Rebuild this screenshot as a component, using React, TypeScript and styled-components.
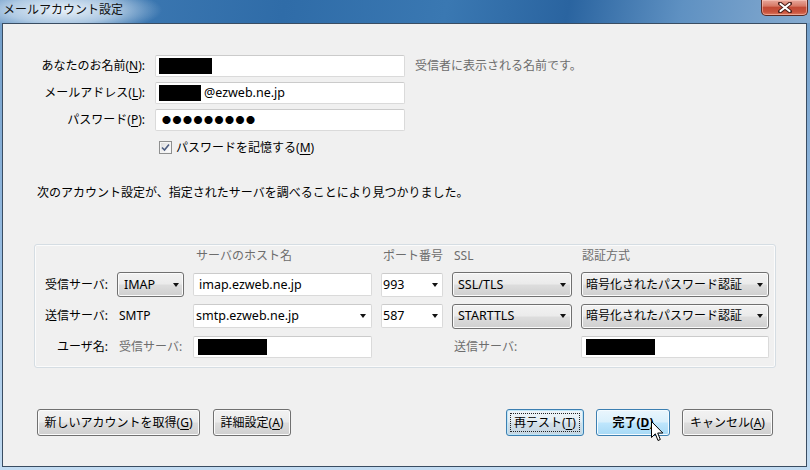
import React from 'react';
import styled, { createGlobalStyle, css } from 'styled-components';

const FONT = `"Segoe UI", "Noto Sans", "Noto Sans CJK JP", sans-serif`;

const Global = createGlobalStyle`
  html, body { margin: 0; padding: 0; background: #bcd6ee; }
  body { font-family: ${FONT}; font-size: 12px; color: #000; }
  * { box-sizing: border-box; }
  u { text-decoration-thickness: 1px; text-underline-offset: 2px; }
`;

const Window = styled.div`
  position: relative;
  width: 810px;
  height: 470px;
  display: flex;
  flex-direction: column;
  overflow: hidden;
  background: linear-gradient(180deg, #6f9cc8 0%, #98bde2 55%, #c3dcf2 100%);
`;

const TitleBar = styled.div`
  height: 23px;
  flex: none;
  display: flex;
  justify-content: space-between;
  align-items: flex-start;
  background:
    radial-gradient(ellipse 100px 24px at 62px 10px, rgba(240, 246, 252, 0.97) 0%, rgba(205, 223, 240, 0.75) 55%, rgba(200, 220, 238, 0) 100%),
    linear-gradient(100deg, #5b8ec0 0%, #3a76b0 18%, #2f6ca8 35%, #3a78b2 55%, #2a64a0 70%, #5f91c2 84%, #86abd0 100%);
`;

const Title = styled.div`
  padding-left: 3px;
  line-height: 20px;
  font-size: 12px;
  color: #111;
  white-space: nowrap;
`;

const CloseBtn = styled.div`
  width: 47px;
  height: 16px;
  margin-right: 2px;
  border: 1px solid #5a2a24;
  border-top: none;
  border-radius: 0 0 5px 5px;
  background: linear-gradient(180deg, #e7a89c 0%, #d77966 40%, #c24a35 50%, #c9533d 80%, #dd7b62 100%);
  box-shadow: inset 0 0 0 1px rgba(255, 210, 200, 0.5);
  display: flex;
  align-items: center;
  justify-content: center;
`;

const Client = styled.div`
  flex: 1;
  margin: 0 3px 3px 2px;
  border: 1px solid #3a4d62;
  background: #f0f0f0;
  display: flex;
  flex-direction: column;
`;

const FormGrid = styled.div`
  margin-top: 31px;
  display: grid;
  grid-template-columns: 142px 250px 1fr;
  grid-auto-rows: 22px;
  column-gap: 10px;
  row-gap: 5px;
`;

const FieldLabel = styled.div`
  align-self: center;
  text-align: right;
  white-space: nowrap;
  line-height: 16px;
`;

const Hint = styled.div`
  align-self: center;
  color: #6d6d6d;
  white-space: nowrap;
  line-height: 16px;
`;

const TextBox = styled.div<{ $h?: number; $pl?: number }>`
  height: ${(p) => p.$h ?? 22}px;
  align-self: center;
  background: #fff;
  border: 1px solid #dadada;
  border-top-color: #cbcbcb;
  border-radius: 2px;
  display: flex;
  align-items: center;
  padding-left: ${(p) => p.$pl ?? 3}px;
  padding-right: 8px;
  white-space: nowrap;
  line-height: 16px;
  font-size: 12.5px;
`;

const Redact = styled.span<{ $w: number }>`
  display: inline-block;
  width: ${(p) => p.$w}px;
  height: 16px;
  background: #000;
  flex: none;
`;

const AfterRedact = styled.span`
  margin-left: 3px;
`;

const Dots = styled.span`
  font-family: "Noto Sans CJK JP", sans-serif;
  font-size: 9px;
  letter-spacing: 1.5px;
  margin-left: 3px;
  line-height: 16px;
`;

const CheckRow = styled.div`
  grid-column: 2 / span 2;
  display: flex;
  align-items: center;
  gap: 4px;
  padding-left: 4px;
  white-space: nowrap;
`;

const CheckBox = styled.span`
  width: 13px;
  height: 13px;
  flex: none;
  border: 1px solid #8e8f8f;
  background: linear-gradient(135deg, #d8d8d8 0%, #f4f4f4 60%, #ffffff 100%);
  box-shadow: inset 0 0 0 1px #f4f4f4;
  display: flex;
  align-items: center;
  justify-content: center;
`;

const Message = styled.div`
  margin-top: 26px;
  padding-left: 34px;
  line-height: 18px;
  white-space: nowrap;
`;

const GroupBox = styled.div`
  margin: 42px 30px 0 31px;
  border: 1px solid #d5dde3;
  border-radius: 3px;
  box-shadow: inset 0 0 0 1px #fbfbfb;
  padding: 1px 6px 9px 0;
  display: grid;
  grid-template-columns: 73px 67px 179px 62px 120px 188px;
  grid-template-rows: 20px 25px 26px 23px;
  column-gap: 9px;
  row-gap: 6px;
`;

const GroupLabel = styled.div`
  align-self: center;
  text-align: right;
  white-space: nowrap;
  line-height: 16px;
`;

const ColText = styled.div<{ $pl: number; $gray?: boolean }>`
  align-self: center;
  padding-left: ${(p) => p.$pl}px;
  color: ${(p) => (p.$gray ? '#6d6d6d' : '#000')};
  white-space: nowrap;
  line-height: 16px;
`;

const Spacer = styled.div<{ $col: number }>`
  grid-column: ${(p) => p.$col};
`;

const buttonFace = css`
  border: 1px solid #707070;
  border-radius: 3px;
  background: linear-gradient(180deg, #f2f2f2 0%, #ebebeb 48%, #dddddd 52%, #cfcfcf 100%);
  box-shadow: inset 0 0 0 1px #fbfbfb;
`;

const SelectBtn = styled.div<{ $pl: number; $pr: number; $fs?: number }>`
  ${buttonFace}
  height: 25px;
  align-self: center;
  display: flex;
  align-items: center;
  justify-content: space-between;
  padding: 0 ${(p) => p.$pr}px 0 ${(p) => p.$pl}px;
  white-space: nowrap;
  line-height: 16px;
  font-size: ${(p) => p.$fs ?? 12.5}px;
`;

const Combo = styled.div<{ $pl: number; $pr: number; $h: number }>`
  height: ${(p) => p.$h}px;
  align-self: center;
  background: #fff;
  border: 1px solid #dadada;
  border-top-color: #cbcbcb;
  border-radius: 2px;
  display: flex;
  align-items: center;
  justify-content: space-between;
  padding: 0 ${(p) => p.$pr}px 0 ${(p) => p.$pl}px;
  white-space: nowrap;
  line-height: 16px;
  font-size: 12.5px;
`;

const Caret = styled.span`
  width: 0;
  height: 0;
  flex: none;
  border-left: 3.5px solid transparent;
  border-right: 3.5px solid transparent;
  border-top: 4px solid #111;
`;

const Footer = styled.div`
  margin-top: 41px;
  padding: 0 33px 0 34px;
  display: flex;
  justify-content: space-between;
`;

const BtnGroup = styled.div<{ $gap: number }>`
  display: flex;
  gap: ${(p) => p.$gap}px;
`;

const Button = styled.div<{ $w: number; $state?: 'focus' | 'hover' }>`
  ${buttonFace}
  position: relative;
  width: ${(p) => p.$w}px;
  height: 27px;
  display: flex;
  align-items: center;
  justify-content: center;
  white-space: nowrap;
  line-height: 16px;
  ${(p) =>
    p.$state === 'focus' &&
    css`
      border-color: #3c7fb1;
      background: linear-gradient(180deg, #eef4f8 0%, #e4edf3 48%, #d3e0e9 52%, #c6d6e2 100%);
      box-shadow: inset 0 0 0 1px #bfe6f7;
    `}
  ${(p) =>
    p.$state === 'hover' &&
    css`
      border-color: #3c7fb1;
      background: linear-gradient(180deg, #eaf6fd 0%, #d9f0fc 48%, #bee6fd 52%, #a7d9f5 100%);
      box-shadow: inset 0 0 0 1px #f4fbff;
      font-weight: bold;
    `}
`;

const FocusRect = styled.span`
  position: absolute;
  inset: 3px;
  border: 1px dotted #222;
  pointer-events: none;
`;

const Cursor = styled.svg`
  position: absolute;
  left: 651px;
  top: 421px;
`;

const Acc = ({ k }: { k: string }) => (
  <>
    (<u>{k}</u>)
  </>
);

export default function App() {
  return (
    <>
      <Global />
      <Window>
        <TitleBar>
          <Title>メールアカウント設定</Title>
          <CloseBtn>
            <svg width="14" height="11" viewBox="0 0 14 11">
              <path d="M2 1.5 L12 9.5 M12 1.5 L2 9.5" stroke="#4a1f1a" strokeWidth="4" strokeLinecap="round" />
              <path d="M2.5 2 L11.5 9 M11.5 2 L2.5 9" stroke="#ffffff" strokeWidth="2.2" strokeLinecap="round" />
            </svg>
          </CloseBtn>
        </TitleBar>
        <Client>
          <FormGrid>
            <FieldLabel>
              あなたのお名前<Acc k="N" />:
            </FieldLabel>
            <TextBox>
              <Redact $w={53} />
            </TextBox>
            <Hint>受信者に表示される名前です。</Hint>

            <FieldLabel>
              メールアドレス<Acc k="L" />:
            </FieldLabel>
            <TextBox>
              <Redact $w={42} />
              <AfterRedact>@ezweb.ne.jp</AfterRedact>
            </TextBox>
            <div />

            <FieldLabel>
              パスワード<Acc k="P" />:
            </FieldLabel>
            <TextBox>
              <Dots>●●●●●●●●●</Dots>
            </TextBox>
            <div />

            <div />
            <CheckRow>
              <CheckBox>
                <svg width="9" height="9" viewBox="0 0 9 9">
                  <path d="M1 4.5 L3.5 7 L8 1.5" stroke="#4d5d80" strokeWidth="1.6" fill="none" />
                </svg>
              </CheckBox>
              <span>
                パスワードを記憶する<Acc k="M" />
              </span>
            </CheckRow>
          </FormGrid>

          <Message>次のアカウント設定が、指定されたサーバを調べることにより見つかりました。</Message>

          <GroupBox>
            <Spacer $col={1} />
            <Spacer $col={2} />
            <ColText $pl={3} $gray>サーバのホスト名</ColText>
            <ColText $pl={2} $gray>ポート番号</ColText>
            <ColText $pl={2} $gray>SSL</ColText>
            <ColText $pl={1} $gray>認証方式</ColText>

            <GroupLabel>受信サーバ:</GroupLabel>
            <SelectBtn $pl={6} $pr={4}>
              IMAP
              <Caret />
            </SelectBtn>
            <TextBox $h={23} $pl={5}>imap.ezweb.ne.jp</TextBox>
            <Combo $h={24} $pl={1} $pr={4}>
              993
              <Caret />
            </Combo>
            <SelectBtn $pl={5} $pr={5}>
              SSL/TLS
              <Caret />
            </SelectBtn>
            <SelectBtn $pl={4} $pr={5} $fs={12}>
              暗号化されたパスワード認証
              <Caret />
            </SelectBtn>

            <GroupLabel>送信サーバ:</GroupLabel>
            <ColText $pl={2}>SMTP</ColText>
            <Combo $h={24} $pl={2} $pr={5}>
              smtp.ezweb.ne.jp
              <Caret />
            </Combo>
            <Combo $h={24} $pl={1} $pr={4}>
              587
              <Caret />
            </Combo>
            <SelectBtn $pl={5} $pr={5}>
              STARTTLS
              <Caret />
            </SelectBtn>
            <SelectBtn $pl={4} $pr={5} $fs={12}>
              暗号化されたパスワード認証
              <Caret />
            </SelectBtn>

            <GroupLabel>ユーザ名:</GroupLabel>
            <ColText $pl={2} $gray>受信サーバ:</ColText>
            <TextBox $pl={4}>
              <Redact $w={69} />
            </TextBox>
            <Spacer $col={4} />
            <ColText $pl={2} $gray>送信サーバ:</ColText>
            <TextBox $pl={4}>
              <Redact $w={69} />
            </TextBox>
          </GroupBox>

          <Footer>
            <BtnGroup $gap={13}>
              <Button $w={163}>
                新しいアカウントを取得<Acc k="G" />
              </Button>
              <Button $w={78}>
                詳細設定<Acc k="A" />
              </Button>
            </BtnGroup>
            <BtnGroup $gap={12}>
              <Button $w={78} $state="focus">
                <FocusRect />
                再テスト<Acc k="T" />
              </Button>
              <Button $w={74} $state="hover">
                完了<Acc k="D" />
              </Button>
              <Button $w={91}>
                キャンセル<Acc k="A" />
              </Button>
            </BtnGroup>
          </Footer>
        </Client>
        <Cursor width="13" height="22" viewBox="0 0 13 22">
          <path
            d="M0.5 0.5 L0.5 16.5 L4.3 12.8 L7 19.5 L9.3 18.5 L6.7 12 L11.8 12 Z"
            fill="#fff"
            stroke="#000"
            strokeWidth="1"
            strokeLinejoin="miter"
          />
        </Cursor>
      </Window>
    </>
  );
}
